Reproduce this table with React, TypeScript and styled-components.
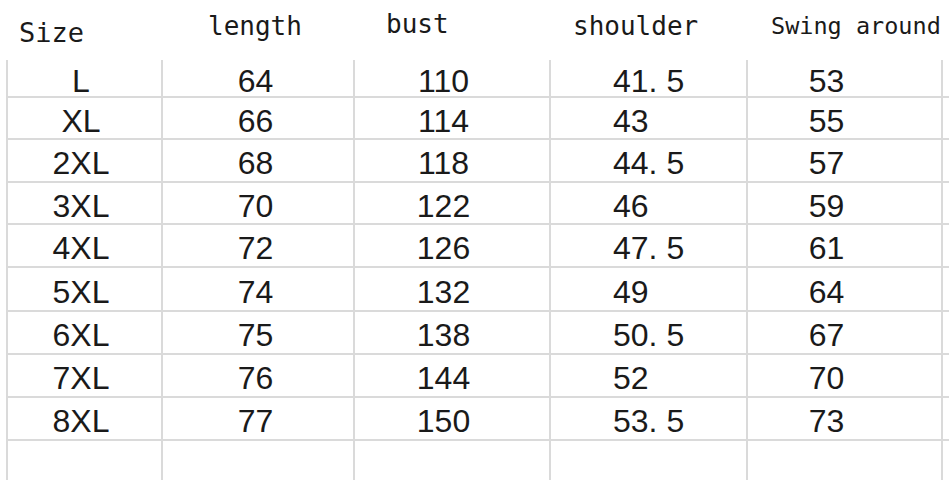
import React from 'react'
import styled, { createGlobalStyle } from 'styled-components'

const GlobalStyle = createGlobalStyle`
    html, body {
        margin: 0;
        padding: 0;
        background: #ffffff;
        overflow: hidden;
    }
`

type Align = 'center' | 'left'

interface Column {
    label: string;
    width: number;
    labelSize: number;
    labelLeft: number;
    labelTop: number;
    align: Align;
    padLeft: number;
    padRight: number;
}

const columns: Column[] = [
    { label: 'Size', width: 155, labelSize: 27, labelLeft: 13, labelTop: 19, align: 'center', padLeft: 0, padRight: 7 },
    { label: 'length', width: 192, labelSize: 26, labelLeft: 47, labelTop: 13, align: 'center', padLeft: 0, padRight: 5 },
    { label: 'bust', width: 196, labelSize: 26, labelLeft: 33, labelTop: 11, align: 'center', padLeft: 0, padRight: 17 },
    { label: 'shoulder', width: 197, labelSize: 26, labelLeft: 24, labelTop: 13, align: 'left', padLeft: 62, padRight: 0 },
    { label: 'Swing around', width: 195, labelSize: 23.5, labelLeft: 25, labelTop: 15, align: 'center', padLeft: 0, padRight: 36 },
]

const rows: string[][] = [
    ['L', '64', '110', '41. 5', '53'],
    ['XL', '66', '114', '43', '55'],
    ['2XL', '68', '118', '44. 5', '57'],
    ['3XL', '70', '122', '46', '59'],
    ['4XL', '72', '126', '47. 5', '61'],
    ['5XL', '74', '132', '49', '64'],
    ['6XL', '75', '138', '50. 5', '67'],
    ['7XL', '76', '144', '52', '70'],
    ['8XL', '77', '150', '53. 5', '73'],
    ['', '', '', '', ''],
]

const rowHeights = [38, 42, 43, 42, 43, 44, 43, 43, 43, 45]

const Page = styled.div`
    width: 949px;
    height: 480px;
    padding-left: 6px;
    box-sizing: border-box;
    background: #ffffff;
`
const HeaderRow = styled.div`
    display: flex;
    height: 60px;
`
const HeaderCell = styled.div<{ $width: number, $size: number, $left: number, $top: number }>`
    width: ${(p) => p.$width}px;
    padding-left: ${(p) => p.$left}px;
    padding-top: ${(p) => p.$top}px;
    box-sizing: border-box;
    font-family: "DejaVu Sans Mono", "Liberation Mono", monospace;
    font-size: ${(p) => p.$size}px;
    line-height: ${(p) => p.$size}px;
    color: #1a1a1a;
    white-space: nowrap;
`
const Row = styled.div<{ $height: number }>`
    display: flex;
    height: ${(p) => p.$height}px;
    box-sizing: border-box;
    border-bottom: 2px solid #dadada;

    &:last-child {
        border-bottom: none;
    }
`
const Cell = styled.div<{ $width: number, $align: Align, $padLeft: number, $padRight: number }>`
    display: flex;
    align-items: center;
    justify-content: ${(p) => (p.$align === 'left' ? 'flex-start' : 'center')};
    width: ${(p) => p.$width}px;
    padding: 5px ${(p) => p.$padRight}px 0 ${(p) => p.$padLeft}px;
    box-sizing: border-box;
    border-left: 2px solid #dadada;
    font-family: "Liberation Sans", Arial, sans-serif;
    font-size: 32px;
    line-height: 32px;
    color: #1a1a1a;
    white-space: pre;

    &:last-child {
        border-right: 2px solid #dadada;
        width: ${(p) => p.$width + 2}px;
    }
`

export default function App() {
    return (
        <Page>
            <GlobalStyle />
            <HeaderRow>
                {columns.map((c) => (
                    <HeaderCell key={c.label} $width={c.width} $size={c.labelSize} $left={c.labelLeft} $top={c.labelTop}>
                        {c.label}
                    </HeaderCell>
                ))}
            </HeaderRow>
            {rows.map((r, i) => (
                <Row key={i} $height={rowHeights[i]}>
                    {r.map((v, j) => (
                        <Cell
                            key={j}
                            $width={columns[j].width}
                            $align={columns[j].align}
                            $padLeft={columns[j].padLeft}
                            $padRight={columns[j].padRight}>
                            {v}
                        </Cell>
                    ))}
                </Row>
            ))}
        </Page>
    )
}
